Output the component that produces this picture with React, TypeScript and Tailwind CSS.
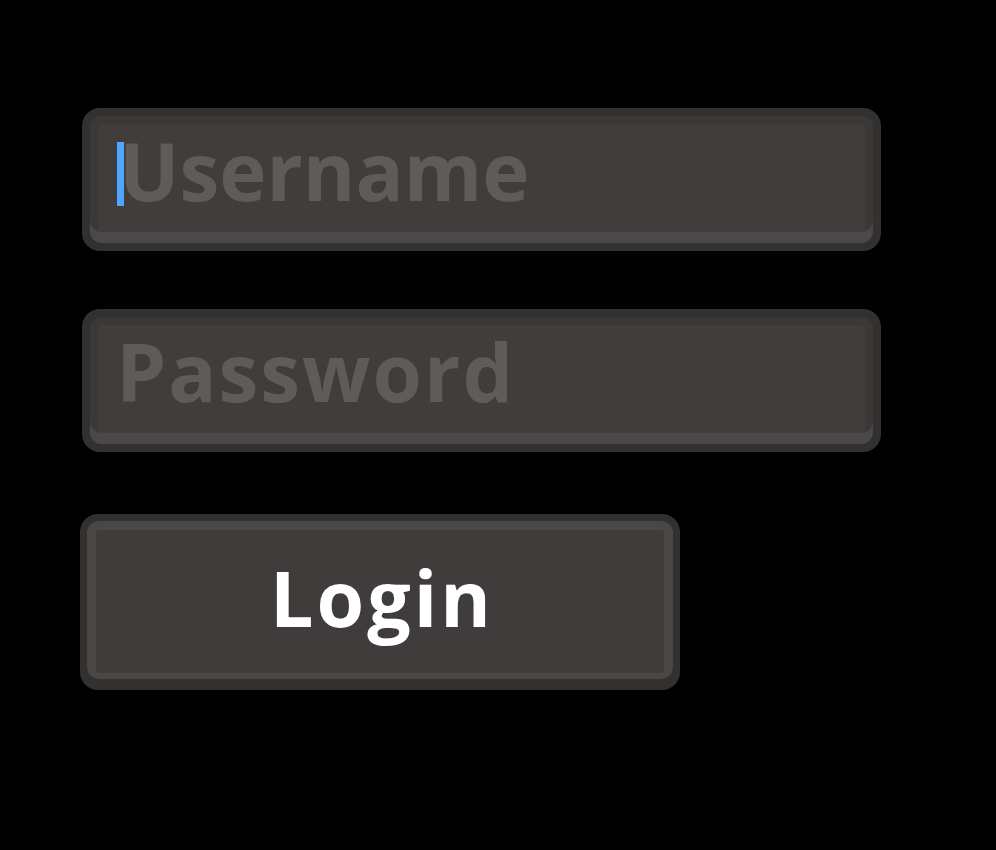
export default function App() {
	return (
		<div className="min-h-[850px] w-full bg-black pl-[82px] pt-[108px]" style={{ fontFamily: '"Open Sans", "Noto Sans", sans-serif' }}>
			<div className="flex flex-col gap-[58px] w-[799px]">
				{/* Username */}
				<div className="rounded-[18px] bg-[#333030] p-[8px]">
					<div className="relative h-[127px] rounded-[12px] bg-[#403d3c] shadow-[inset_0_-11px_0_#4a4848,inset_0_0_0_8px_#3b3838]">
						<input
							type="text"
							placeholder="Username"
							className="h-full w-full bg-transparent pl-[29px] pb-[21px] text-[80px] font-bold leading-none text-white outline-none placeholder:text-[#5f5b5a]"
						/>
						<div className="absolute left-[27px] top-[26px] h-[64px] w-[7px] bg-[#4da6ff]" />
					</div>
				</div>

				{/* Password */}
				<div className="rounded-[18px] bg-[#333030] p-[8px]">
					<div className="h-[127px] rounded-[12px] bg-[#403d3c] shadow-[inset_0_-11px_0_#4a4848,inset_0_0_0_8px_#3b3838]">
						<input
							type="password"
							placeholder="Password"
							className="h-full w-full bg-transparent pl-[26px] pb-[21px] text-[80px] font-bold leading-none tracking-[2px] text-white outline-none placeholder:text-[#5f5b5a]"
						/>
					</div>
				</div>
			</div>

			{/* Login button */}
			<button className="mt-[62px] -ml-[2px] block w-[600px] rounded-[18px] bg-[#333130] px-[7px] pt-[7px] pb-[11px]">
				<div className="flex h-[158px] items-center justify-center rounded-[12px] border-[9px] border-b-[6px] border-[#4a4847] bg-[#3f3c3b] pb-[8px] pl-[4px] text-[77px] font-bold leading-none tracking-[3px] text-white">
					Login
				</div>
			</button>
		</div>
	);
}
